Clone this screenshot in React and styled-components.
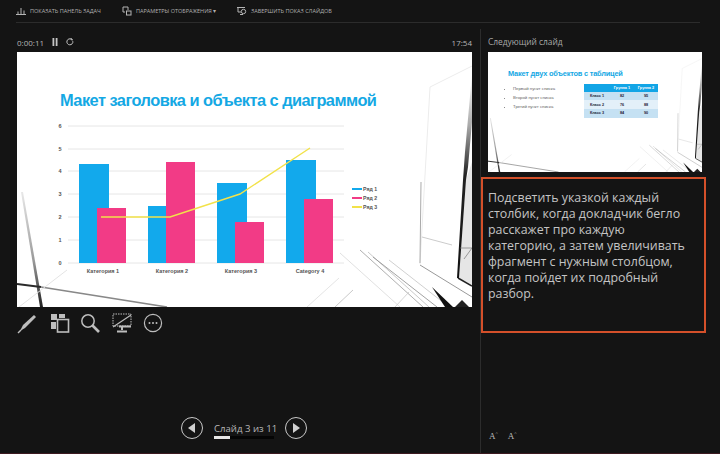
import React from 'react'
import styled, { createGlobalStyle } from 'styled-components'

const GlobalStyle = createGlobalStyle`
    html, body {
        margin: 0;
        padding: 0;
        background: #141414;
    }
    * {
        box-sizing: border-box;
    }
`

const categories = [
    { name: 'Категория 1', x: 79, blue: 164, pink: 208 },
    { name: 'Категория 2', x: 148, blue: 206, pink: 162, narrow: true },
    { name: 'Категория 3', x: 217, blue: 183, pink: 222 },
    { name: 'Category 4', x: 286, blue: 160, pink: 199 }
]

const gridLines = [[6, 126], [5, 149], [4, 171], [3, 194], [2, 217], [1, 240], [0, 263]]
const legend = [['Ряд 1', '#12a9ec', 189], ['Ряд 2', '#f23b86', 198], ['Ряд 3', '#f2e24a', 207]]
const tableRows = [['Класс 1', '82', '95'], ['Класс 2', '76', '88'], ['Класс 3', '84', '90']]

const fanLines = [
    ['M323 201 L383 255', '#d8d8d8'],
    ['M343 198 L406 255', '#9a9a9a'],
    ['M351 200 L412 255', '#bbb'],
    ['M356 205 L420 255', '#8a8a8a'],
    ['M372 208 L432 255', '#c4c4c4'],
    ['M290 255 L322 226', '#ddd'],
    ['M318 255 L336 238', '#bbb'],
    ['M378 255 L392 240', '#ccc']
]

const SlideBackdrop = () => (
    <Backdrop viewBox = "0 0 455 255" preserveAspectRatio = "none">
        <defs>
            <linearGradient id = "band" x1 = "0" y1 = "0" x2 = "0" y2 = "1">
                <stop offset = "0" stopColor = "#fff"/>
                <stop offset = "0.25" stopColor = "#aaa"/>
                <stop offset = "0.5" stopColor = "#222"/>
                <stop offset = "1" stopColor = "#111"/>
            </linearGradient>
            <linearGradient id = "leftBeam" x1 = "0" y1 = "0" x2 = "0" y2 = "1">
                <stop offset = "0" stopColor = "#e8e8e8"/>
                <stop offset = "0.6" stopColor = "#999"/>
                <stop offset = "1" stopColor = "#222"/>
            </linearGradient>
        </defs>
        <g fill = "none">
            <path d = "M455 110 L449 128 L442 226 L455 234 Z" fill = "#e6e6e6"/>
            <path d = "M455 22 L455 70 L451 115 L449 128 L442 226 L440 226 L446 128 L448 100 Z" fill = "url(#band)"/>
            <path d = "M455 14 L413 35 L403 212" stroke = "#ececec" strokeWidth = "1"/>
            <path d = "M404 130 L403 211" stroke = "#aaa" strokeWidth = "1"/>
            <path d = "M405 185 L435 193" stroke = "#ccc" strokeWidth = "1"/>
            <path d = "M441 226 L455 234" stroke = "#222" strokeWidth = "1.5"/>
            <path d = "M403 213 L455 245" stroke = "#999" strokeWidth = "1"/>
            <path d = "M443 196 H455 M447 207 L455 196" stroke = "#777" strokeWidth = "0.7"/>
            {fanLines.map(([d, color]) => <path key = {d} d = {d} stroke = {color} strokeWidth = "0.8"/>)}
            <path d = "M415 235 L436 255 L428 255 Z" fill = "#111"/>
            <path d = "M438 255 L445 248 L452 255 Z" fill = "#222"/>
            <path d = "M4 140 L23 255 L26 255 L6 140 Z" fill = "url(#leftBeam)"/>
            <path d = "M0 232 L24 235" stroke = "#2a2a2a" strokeWidth = "2"/>
            <path d = "M24 235 L150 255" stroke = "#888" strokeWidth = "1.6"/>
            <path d = "M2 255 L50 218" stroke = "#e4e4e4" strokeWidth = "1"/>
        </g>
    </Backdrop>
)

const Chart = () => (
    <ChartSvg viewBox = "48 118 330 160">
        {gridLines.map(([label, y]) => (
            <g key = {label}>
                <line x1 = "68" x2 = "344" y1 = {y} y2 = {y} stroke = "#e6e6e6" strokeWidth = "1"/>
                <text x = "60" y = {y + 2} fontSize = "5.5" fontWeight = "700" fill = "#555" textAnchor = "middle">{label}</text>
            </g>
        ))}
        {categories.map(c => (
            <g key = {c.name}>
                <rect x = {c.x} y = {c.blue} width = {c.narrow ? 18 : 30} height = {263 - c.blue} fill = "#12a9ec"/>
                <rect x = {c.x + 18} y = {c.pink} width = "29" height = {263 - c.pink} fill = "#f23b86"/>
                <text x = {c.x + 24} y = "273" fontSize = "5.5" fontWeight = "700" fill = "#555" textAnchor = "middle">{c.name}</text>
            </g>
        ))}
        <polyline points = "101,217 170,217 240,194 310,148" fill = "none" stroke = "#f2e24a" strokeWidth = "1.4"/>
        {legend.map(([label, color, y]) => (
            <g key = {label}>
                <rect x = "352" y = {y - 1} width = "10" height = "2" fill = {color}/>
                <text x = "363" y = {y + 2} fontSize = "5.2" fontWeight = "700" fill = "#555">{label}</text>
            </g>
        ))}
    </ChartSvg>
)

const App = () => (
    <Root>
        <GlobalStyle/>
        <Toolbar>
            <ToolbarItem $width = {91}>
                <svg width = "10" height = "10" viewBox = "0 0 10 10" fill = "none" stroke = "#b5b5b5" strokeWidth = "1">
                    <path d = "M0 8.5H10M2 8V5.5M5 8V2M8 8V4.5"/>
                </svg>
                ПОКАЗАТЬ ПАНЕЛЬ ЗАДАЧ
            </ToolbarItem>
            <ToolbarItem $width = {100}>
                <svg width = "10" height = "10" viewBox = "0 0 10 10" fill = "none" stroke = "#b5b5b5" strokeWidth = "1">
                    <path d = "M1 1H6V4M1 1V6H3"/>
                    <rect x = "4.5" y = "5" width = "4.5" height = "4"/>
                </svg>
                ПАРАМЕТРЫ ОТОБРАЖЕНИЯ ▾
            </ToolbarItem>
            <ToolbarItem>
                <svg width = "10" height = "10" viewBox = "0 0 10 10" fill = "none" stroke = "#b5b5b5" strokeWidth = "1">
                    <path d = "M0 1.5H8M1 1.5V6H4M3 8.5H6"/>
                    <circle cx = "6.5" cy = "5.5" r = "2.2"/>
                </svg>
                ЗАВЕРШИТЬ ПОКАЗ СЛАЙДОВ
            </ToolbarItem>
        </Toolbar>
        <Main>
            <LeftPane>
                <TimerRow>
                    <Timer>
                        <span>0:00:11</span>
                        <svg width = "6" height = "8" viewBox = "0 0 6 8" fill = "#c4c4c4">
                            <path d = "M0.5 0H2.3V8H0.5ZM3.7 0H5.5V8H3.7Z"/>
                        </svg>
                        <svg width = "8" height = "8" viewBox = "0 0 8 8" fill = "none" stroke = "#c4c4c4" strokeWidth = "1">
                            <path d = "M6.8 3.2A3 3 0 1 1 5.5 1.3M5.2 0V1.8H7"/>
                        </svg>
                    </Timer>
                    <span>17:54</span>
                </TimerRow>
                <Slide>
                    <SlideBackdrop/>
                    <SlideTitle>Макет заголовка и объекта с диаграммой</SlideTitle>
                    <Chart/>
                </Slide>
                <Tools>
                    <ToolIcon viewBox = "0 0 22 22">
                        <path d = "M4 19L7 13L18 3L20 5L9 16Z" fill = "#bdbdbd" stroke = "none"/>
                        <path d = "M2 21L5 18" strokeWidth = "1.5"/>
                    </ToolIcon>
                    <ToolIcon viewBox = "0 0 22 22">
                        <rect x = "3" y = "2" width = "6" height = "6" fill = "#bdbdbd" stroke = "none"/>
                        <rect x = "11" y = "2" width = "6" height = "4" fill = "#bdbdbd" stroke = "none"/>
                        <rect x = "3" y = "10" width = "5" height = "7" fill = "#bdbdbd" stroke = "none"/>
                        <rect x = "9.5" y = "7.5" width = "11" height = "12.5" strokeWidth = "1.6"/>
                    </ToolIcon>
                    <ToolIcon viewBox = "0 0 22 22">
                        <circle cx = "9" cy = "9" r = "6.2" strokeWidth = "1.5"/>
                        <path d = "M13.5 13.5L20 20" strokeWidth = "2.6"/>
                    </ToolIcon>
                    <ToolIcon viewBox = "0 0 22 22">
                        <path d = "M2 2H20V14H2Z" strokeDasharray = "1.5 1" strokeWidth = "1"/>
                        <path d = "M2 15L20 3" strokeWidth = "1.2"/>
                        <path d = "M11 14V18M6 19.5H16M8 14.5H20" strokeWidth = "2"/>
                    </ToolIcon>
                    <ToolIcon viewBox = "0 0 22 22">
                        <circle cx = "11" cy = "11" r = "8.6" strokeWidth = "1.2"/>
                        <circle cx = "7.5" cy = "11" r = "1" fill = "#bdbdbd" stroke = "none"/>
                        <circle cx = "11" cy = "11" r = "1" fill = "#bdbdbd" stroke = "none"/>
                        <circle cx = "14.5" cy = "11" r = "1" fill = "#bdbdbd" stroke = "none"/>
                    </ToolIcon>
                </Tools>
                <Pager>
                    <NavButton>
                        <svg width = "8" height = "10" viewBox = "0 0 8 10" fill = "#d0d0d0"><path d = "M7 0V10L0 5Z"/></svg>
                    </NavButton>
                    <PagerInfo>
                        <span>Слайд 3 из 11</span>
                        <Progress><ProgressFill style = {{ width: `${(3 / 11) * 100}%` }}/></Progress>
                    </PagerInfo>
                    <NavButton>
                        <svg width = "8" height = "10" viewBox = "0 0 8 10" fill = "#d0d0d0"><path d = "M1 0V10L8 5Z"/></svg>
                    </NavButton>
                </Pager>
            </LeftPane>
            <RightPane>
                <NextLabel>Следующий слайд</NextLabel>
                <Thumb>
                    <SlideBackdrop/>
                    <ThumbTitle>Макет двух объектов с таблицей</ThumbTitle>
                    <ThumbBody>
                        <Bullets>
                            <li>Первый пункт списка</li>
                            <li>Второй пункт списка</li>
                            <li>Третий пункт списка</li>
                        </Bullets>
                        <MiniTable>
                            <MiniRow $head>
                                <span/>
                                <span>Группа 1</span>
                                <span>Группа 2</span>
                            </MiniRow>
                            {tableRows.map((row, i) => (
                                <MiniRow key = {row[0]} $odd = {i % 2 === 0}>
                                    {row.map(cell => <span key = {cell}>{cell}</span>)}
                                </MiniRow>
                            ))}
                        </MiniTable>
                    </ThumbBody>
                </Thumb>
                <Notes>
                    Подсветить указкой каждый столбик, когда докладчик бегло расскажет про каждую категорию, а затем увеличивать фрагмент с нужным столбцом, когда пойдет их подробный разбор.
                </Notes>
                <FontControls>
                    <FontIcon>A<sup>^</sup></FontIcon>
                    <FontIcon>A<sup>^</sup></FontIcon>
                </FontControls>
            </RightPane>
        </Main>
        <BottomEdge/>
    </Root>
)

const Root = styled.div `
    width: 720px;
    height: 454px;
    overflow: hidden;
    display: flex;
    flex-direction: column;
    background: #141414;
    color: #b8b8b8;
    font-family: "Open Sans", "Noto Sans", sans-serif;
`

const Toolbar = styled.div `
    height: 23px;
    margin: 0 20px 0 16px;
    flex-shrink: 0;
    display: flex;
    align-items: center;
    gap: 15px;
    border-bottom: 1px solid #2c2c2c;
`

const ToolbarItem = styled.div `
    display: flex;
    align-items: center;
    gap: 4px;
    font-size: 5.5px;
    color: #b0b0b0;
    white-space: nowrap;
    ${props => props.$width ? `width: ${props.$width}px;` : ''}
`

const Main = styled.div `
    flex: 1;
    min-height: 0;
    display: flex;
`

const LeftPane = styled.div `
    width: 480px;
    padding: 0 8px 0 17px;
    display: flex;
    flex-direction: column;
`

const TimerRow = styled.div `
    height: 29px;
    padding-top: 9px;
    display: flex;
    justify-content: space-between;
    align-items: center;
    font-size: 8px;
    color: #b4b4b4;
`

const Timer = styled.div `
    display: flex;
    align-items: center;
    gap: 8px;
`

const Slide = styled.div `
    position: relative;
    width: 455px;
    height: 255px;
    background: #fff;
    overflow: hidden;
    display: flex;
    flex-direction: column;
    font-family: "Liberation Sans", sans-serif;
`

const Backdrop = styled.svg `
    position: absolute;
    inset: 0;
    width: 100%;
    height: 100%;
`

const SlideTitle = styled.div `
    position: relative;
    margin: 36px 0 0 43px;
    height: 24px;
    line-height: 24px;
    font-size: 16.4px;
    font-weight: 700;
    letter-spacing: -0.54px;
    color: #14a8e4;
    white-space: nowrap;
`

const ChartSvg = styled.svg `
    position: relative;
    width: 330px;
    height: 160px;
    margin: 6px 0 0 31px;
    font-family: "Liberation Sans", sans-serif;
`

const Tools = styled.div `
    height: 32px;
    margin-left: -1px;
    display: flex;
    align-items: center;
    gap: 9.5px;
`

const ToolIcon = styled.svg `
    width: 22px;
    height: 22px;
    fill: none;
    stroke: #bdbdbd;
    flex-shrink: 0;
`

const Pager = styled.div `
    margin-top: 78px;
    padding-left: 164px;
    display: flex;
    align-items: center;
    gap: 11px;
`

const NavButton = styled.div `
    width: 22px;
    height: 22px;
    border: 1.5px solid #c8c8c8;
    border-radius: 50%;
    display: flex;
    align-items: center;
    justify-content: center;
`

const PagerInfo = styled.div `
    width: 60px;
    font-size: 9.6px;
    line-height: 13px;
    color: #b8b8b8;
    white-space: nowrap;
    margin-top: 4px;
`

const Progress = styled.div `
    height: 3px;
    margin-top: 1px;
    background: #050505;
`

const ProgressFill = styled.div `
    height: 100%;
    background: #e8e8e8;
`

const RightPane = styled.div `
    flex: 1;
    min-width: 0;
    margin-top: 6px;
    border-left: 1px solid #2c2c2c;
    display: flex;
    flex-direction: column;
`

const NextLabel = styled.div `
    height: 23px;
    padding: 7px 0 0 7px;
    font-size: 8.4px;
    line-height: 12px;
    color: #aaa;
`

const Thumb = styled.div `
    position: relative;
    width: 214px;
    height: 120px;
    margin-left: 7px;
    background: #fff;
    overflow: hidden;
    font-family: "Liberation Sans", sans-serif;
`

const ThumbTitle = styled.div `
    position: relative;
    margin: 17px 0 0 20px;
    font-size: 7.4px;
    line-height: 10px;
    font-weight: 700;
    letter-spacing: -0.2px;
    color: #14a8e4;
    white-space: nowrap;
`

const ThumbBody = styled.div `
    position: relative;
    margin: 5px 0 0 20px;
    display: flex;
`

const Bullets = styled.ul `
    width: 76px;
    margin: 0;
    padding: 0 0 0 5px;
    font-size: 4.3px;
    line-height: 9px;
    color: #666;
    li {
        white-space: nowrap;
    }
`

const MiniTable = styled.div `
    width: 74px;
    display: flex;
    flex-direction: column;
    font-size: 3.8px;
    font-weight: 700;
`

const MiniRow = styled.div `
    height: ${props => props.$head ? 7.5 : 8.8}px;
    display: grid;
    grid-template-columns: 26px 24px 24px;
    align-items: center;
    text-align: center;
    background: ${props => props.$head ? '#12a5e6' : props.$odd ? '#c5e1f3' : '#e3f0f9'};
    color: ${props => props.$head ? '#fff' : '#223'};
`

const Notes = styled.div `
    width: 225px;
    height: 156px;
    margin-top: 5px;
    padding: 11px 19px 0 5px;
    border: 2px solid #d4502a;
    font-size: 12.4px;
    line-height: 16px;
    color: #c4c4c4;
`

const FontControls = styled.div `
    margin-top: 98px;
    padding-left: 8px;
    display: flex;
    gap: 10px;
`

const FontIcon = styled.span `
    font-family: "Liberation Serif", serif;
    font-size: 9px;
    line-height: 10px;
    color: #bbb;
    sup {
        font-size: 5px;
        line-height: 0;
    }
`

const BottomEdge = styled.div `
    height: 1px;
    flex-shrink: 0;
    background: #3c1a20;
`

export default App
